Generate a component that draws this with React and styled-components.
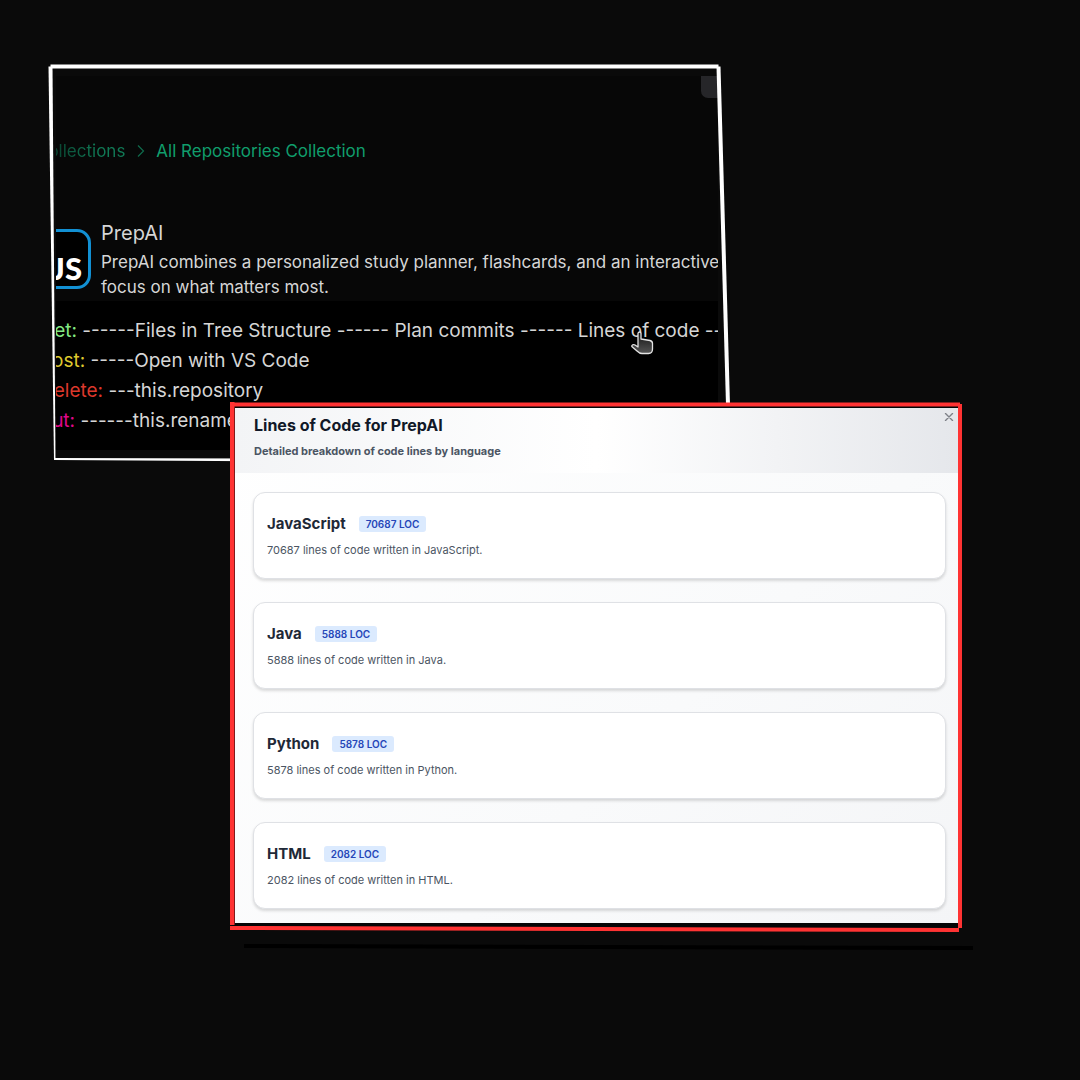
import React from "react";
import styled, { createGlobalStyle } from "styled-components";

const GlobalStyle = createGlobalStyle`
  *, *::before, *::after { box-sizing: border-box; }
  body {
    margin: 0;
    background: #0a0a0a;
    color: #d6d6d6;
    font-family: Inter, "Liberation Sans", sans-serif;
  }
  h1, h2, h3, p, ul, ol { margin: 0; padding: 0; }
  ul, ol { list-style: none; }
`;

const Page = styled.main`
  min-height: 100vh;
  padding: 65px 118px 60px 49px;
  overflow: hidden;
`;

const RepoWindow = styled.section`
  position: relative;
  max-width: 680px;
  padding: 11px 11px 13px 7px;
`;

const Frame = styled.svg`
  position: absolute;
  inset: 0;
  width: 100%;
  height: 100%;
  overflow: visible;
  pointer-events: none;
`;

const Viewport = styled.div`
  display: flex;
  flex-direction: column;
  overflow: hidden;
  background: #070707;
`;

const CornerTab = styled.div`
  align-self: flex-end;
  width: 17px;
  height: 22px;
  border-bottom-left-radius: 7px;
  background: #262629;
`;

const Breadcrumb = styled.nav`
  display: flex;
  align-items: center;
  gap: 10px;
  margin: 41px 0 56px -20px;
  color: #0f6b4c;
  font-size: 17px;
  line-height: 24px;
  white-space: nowrap;
`;

const Crumb = styled.a`
  color: ${(p) => (p.$current ? "#109e6c" : "transparent")};
  background: ${(p) => (p.$current ? "none" : "linear-gradient(90deg, #0a4330 20%, #107a56 70%)")};
  background-clip: ${(p) => (p.$current ? "border-box" : "text")};
  text-decoration: none;
`;

const RepoHeader = styled.header`
  display: flex;
  gap: 10px;
  margin-left: -25px;
`;

const Logo = styled.div`
  display: flex;
  flex: none;
  align-items: flex-end;
  justify-content: flex-end;
  width: 60px;
  height: 60px;
  margin-top: 10px;
  padding: 0 6px 1px 0;
  border: 3px solid #1290d3;
  border-radius: 14px;
  background: #000;
  color: #fff;
  font: 900 31px/34px Lato, sans-serif;
`;

const RepoText = styled.div`
  flex: none;
  padding-bottom: 1px;
`;

const RepoName = styled.h1`
  margin-bottom: 3px;
  font-size: 20px;
  font-weight: 400;
  line-height: 28px;
`;

const RepoSummary = styled.p`
  font-size: 17px;
  line-height: 25px;
  white-space: nowrap;
`;

const Commands = styled.ul`
  padding: 15px 0 14px;
  background: #000;
`;

const Command = styled.li`
  margin-left: -16px;
  font-size: 19px;
  line-height: 30px;
  white-space: pre;
`;

const Method = styled.span`
  color: ${(p) => p.$color};
`;

const Pointer = styled.svg`
  position: absolute;
  top: 265px;
  left: 581px;
  width: 24px;
  height: 25px;
`;

const Dialog = styled.section`
  position: relative;
  margin: -61px 0 0 181px;
  padding: 6px 4px 9px 5px;
`;

const DialogBody = styled.div`
  position: relative;
  background: linear-gradient(135deg, #ffffff, #f9fafb 60%, #f4f5f7);
`;

const Backing = styled.div`
  position: absolute;
  inset: 2px 3px 3px 2px;
  background: #050506;
`;

const DialogHeader = styled.header`
  display: flex;
  justify-content: space-between;
  align-items: flex-start;
  padding: 5px 4px 13px 19px;
  background: linear-gradient(90deg, #f3f4f6, #ffffff 50%, #e5e7eb);
`;

const DialogTitle = styled.h2`
  margin-bottom: 5px;
  color: #111827;
  font-size: 16px;
  font-weight: 700;
  line-height: 24px;
`;

const DialogSubtitle = styled.p`
  color: #4b5563;
  font-size: 11px;
  font-weight: 700;
  line-height: 18px;
`;

const CloseButton = styled.button`
  display: flex;
  margin: 0;
  padding: 0;
  border: 0;
  background: none;
  color: #7d8087;
  cursor: pointer;
`;

const LanguageList = styled.ul`
  display: grid;
  gap: 23px;
  padding: 19px 12px 14px 18px;
`;

const LanguageCard = styled.li`
  padding: 20px 13px 19px;
  border: 1px solid #dfe1e5;
  border-radius: 12px;
  background: #fff;
  box-shadow: 0 2px 3px rgba(0, 0, 0, 0.14);
`;

const LanguageHead = styled.div`
  display: flex;
  align-items: center;
  gap: 13px;
  margin-bottom: 6px;
`;

const LanguageName = styled.h3`
  color: #1f2937;
  font-size: 15px;
  font-weight: 700;
  line-height: 22px;
`;

const Badge = styled.span`
  padding: 0 7px;
  border-radius: 3px;
  background: #dbeafe;
  color: #2546b8;
  font-size: 10px;
  font-weight: 600;
  line-height: 16px;
`;

const LanguageNote = styled.p`
  color: #4b5563;
  font-size: 11px;
  line-height: 18px;
`;

const commands = [
  { method: "Get:", color: "#83e883", text: " ------Files in Tree Structure ------ Plan commits ------ Lines of code ------" },
  { method: "Post:", color: "#dfc92f", text: " -----Open with VS Code" },
  { method: "Delete:", color: "#dc382c", text: " ---this.repository" },
  { method: "Put:", color: "#e0088c", text: " ------this.rename" },
];

const languages = [
  { name: "JavaScript", lines: 70687 },
  { name: "Java", lines: 5888 },
  { name: "Python", lines: 5878 },
  { name: "HTML", lines: 2082 },
];

export default function App() {
  return (
    <>
      <GlobalStyle />
      <Page>
        <RepoWindow>
          <Viewport>
            <CornerTab />
            <Breadcrumb aria-label="Breadcrumb">
              <Crumb href="#collections">Collections</Crumb>
              <svg width="11" height="14" viewBox="0 0 11 14" fill="none" stroke="currentColor" strokeWidth="1.2" aria-hidden="true">
                <path d="M3 1.5 8.5 7 3 12.5" />
              </svg>
              <Crumb href="#all" $current>All Repositories Collection</Crumb>
            </Breadcrumb>
            <RepoHeader>
              <Logo>JS</Logo>
              <RepoText>
                <RepoName>PrepAI</RepoName>
                <RepoSummary>
                  PrepAI combines a personalized study planner, flashcards, and an interactive
                  <br />
                  focus on what matters most.
                </RepoSummary>
              </RepoText>
            </RepoHeader>
            <Commands>
              {commands.map((c) => (
                <Command key={c.method}>
                  <Method $color={c.color}>{c.method}</Method>
                  {c.text}
                </Command>
              ))}
            </Commands>
          </Viewport>
          <Frame viewBox="0 0 680 398" preserveAspectRatio="none" aria-hidden="true">
            <path d="M1.5 -0.5H669.5V3.500H1.5Z" fill="#fff" />
            <path d="M-0.500 1.5 3.500 1.5 6.500 395 5 395Z" fill="#fff" />
            <path d="M667.5 1.500H671.5L681 340H677Z" fill="#fff" />
            <path d="M5 393 681 395V399L5 395Z" fill="#fff" />
          </Frame>
          <Pointer viewBox="0 0 24 25" aria-hidden="true">
            <defs>
              <linearGradient id="hand" x1="0" y1="0" x2="0" y2="1">
                <stop offset="0" stopColor="#111" />
                <stop offset="1" stopColor="#555" />
              </linearGradient>
            </defs>
            <path
              d="M8 14V3.5C8 1.5 11 1.5 11 3.5V9L20 10.5C21.8 11 22.5 12 22.5 13.5V19C22.5 21.5 21 23.5 18.5 23.5H12C10 23.5 8.500 22.500 7 21L1.800 16.500C1.500 14.800 3.500 14 5 15L8 17Z"
              fill="url(#hand)"
              stroke="#e4e4e4"
              strokeWidth="1.3"
              strokeLinejoin="round"
            />
          </Pointer>
        </RepoWindow>

        <Dialog role="dialog" aria-labelledby="dialog-title">
          <Backing />
          <DialogBody>
            <DialogHeader>
              <div>
                <DialogTitle id="dialog-title">Lines of Code for PrepAI</DialogTitle>
                <DialogSubtitle>Detailed breakdown of code lines by language</DialogSubtitle>
              </div>
              <CloseButton type="button" aria-label="Close">
                <svg width="10" height="8" viewBox="0 0 10 8" stroke="currentColor" strokeWidth="1.4" strokeLinecap="round" aria-hidden="true">
                  <path d="M1.500 0.500 8.500 7.500M8.500 0.500 1.500 7.500" />
                </svg>
              </CloseButton>
            </DialogHeader>
            <LanguageList>
              {languages.map((l) => (
                <LanguageCard key={l.name}>
                  <LanguageHead>
                    <LanguageName>{l.name}</LanguageName>
                    <Badge>{l.lines} LOC</Badge>
                  </LanguageHead>
                  <LanguageNote>{`${l.lines} lines of code written in ${l.name}.`}</LanguageNote>
                </LanguageCard>
              ))}
            </LanguageList>
          </DialogBody>
          <Frame viewBox="0 0 732 530" preserveAspectRatio="none" aria-hidden="true">
            <path d="M14 542 743 544V548L14 546Z" fill="#000" />
            <path d="M0 0H4.500V523H0Z" fill="#ff3333" />
            <path d="M0 0.500H730V4.500H0Z" fill="#ff3333" />
            <path d="M728 2H732L732 526H728Z" fill="#ff3333" />
            <path d="M0 524 729 526V530L0 528Z" fill="#ff3333" />
          </Frame>
        </Dialog>
      </Page>
    </>
  );
}
